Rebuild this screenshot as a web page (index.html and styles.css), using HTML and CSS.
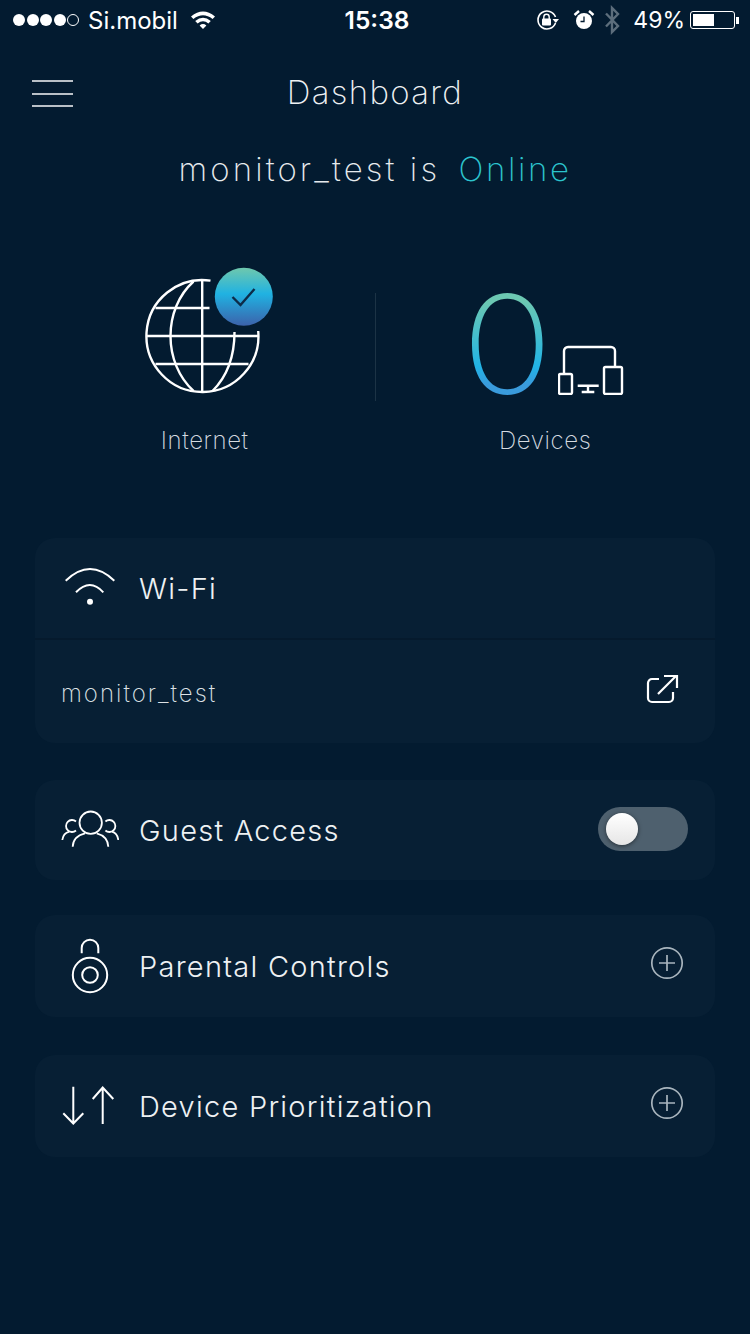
FILE: index.html
```html
<!DOCTYPE html>
<html lang="en">
<head>
  <meta charset="UTF-8">
  <meta name="viewport" content="width=device-width, initial-scale=1.0">
  <title>Dashboard</title>
  <link rel="stylesheet" href="styles.css">
</head>
<body>
  <div class="status-bar">
    <div class="status-left">
      <div class="signal">
        <span class="dot"></span><span class="dot"></span><span class="dot"></span><span class="dot"></span><span class="dot dot-empty"></span>
      </div>
      <span class="carrier">Si.mobil</span>
      <svg class="status-wifi" width="26" height="20" viewBox="0 0 26 20">
        <path d="M1 6.5 Q13 -3.5 25 6.5 L22.6 9 Q13 1.5 3.4 9 Z" fill="#fff"/>
        <path d="M5.2 11 Q13 4.5 20.8 11 L18.4 13.4 Q13 9.2 7.6 13.4 Z" fill="#fff"/>
        <path d="M9.6 15.4 Q13 12.6 16.4 15.4 L13 19 Z" fill="#fff"/>
      </svg>
    </div>
    <span class="time">15:38</span>
    <div class="status-right">
      <svg class="status-icon" width="24" height="22" viewBox="0 0 24 22">
        <path d="M19.5 8 A9 9 0 1 0 19.5 14" fill="none" stroke="#fff" stroke-width="1.6"/>
        <path d="M16.5 10 H23 L19.8 14 Z" fill="#fff"/>
        <rect x="6" y="9.5" width="9" height="7" rx="1" fill="#fff"/>
        <path d="M7.8 10 V8 A2.7 2.7 0 0 1 13.2 8 V10" fill="none" stroke="#fff" stroke-width="1.4"/>
      </svg>
      <svg class="status-icon status-alarm" width="22" height="22" viewBox="0 0 22 22">
        <circle cx="11" cy="12" r="8" fill="#fff"/>
        <path d="M11 7.5 V12.5 H7.5" fill="none" stroke="#021a2f" stroke-width="1.3"/>
        <path d="M1.5 6 L6 2 M20.5 6 L16 2" stroke="#fff" stroke-width="2.4"/>
      </svg>
      <svg class="status-icon" width="16" height="30" viewBox="0 0 16 30">
        <path d="M2 8.5 L14 21 L8 27 V3 L14 9 L2 21.5" fill="none" stroke="#5d6e7c" stroke-width="2.4"/>
      </svg>
      <span class="battery-text">49%</span>
      <div class="battery">
        <div class="battery-body"><div class="battery-fill"></div></div>
        <div class="battery-nub"></div>
      </div>
    </div>
  </div>

  <header class="top-bar">
    <div class="menu-btn"><span></span><span></span><span></span></div>
    <h1>Dashboard</h1>
  </header>

  <p class="subtitle">monitor_test is <span class="online">Online</span></p>

  <section class="stats">
    <div class="stat">
      <svg class="stat-visual" width="136" height="130" viewBox="-3.5 0 136 130">
        <defs>
          <linearGradient id="badgeGrad" x1="0" y1="0" x2="0" y2="1">
            <stop offset="0" stop-color="#6fc8ad"/>
            <stop offset="0.45" stop-color="#20b2e2"/>
            <stop offset="1" stop-color="#3c62ab"/>
          </linearGradient>
        </defs>
        <g fill="none" stroke="#fff" stroke-width="2.4">
          <path d="M70 15.6 A56 56 0 1 0 117.7 66"/>
          <path d="M15 43 H69 M5.7 71 H118 M15 99 H108 M61.7 15 V127"/>
          <path d="M53 16.5 C38 30 30 50 30 71 C30 92 38 112 53 126"/>
          <path d="M72 126 C86 112 94 92 94 67"/>
        </g>
        <circle cx="103.3" cy="31.7" r="29" fill="url(#badgeGrad)"/>
        <path d="M92 32 L100 40 L114 24" fill="none" stroke="#0d2b48" stroke-width="2.4"/>
      </svg>
      <span class="stat-label">Internet</span>
    </div>
    <div class="stat-divider"></div>
    <div class="stat">
      <div class="stat-visual devices-visual">
        <span class="zero">0</span>
        <svg class="devices-icon" width="66" height="50" viewBox="0 0 66 50">
          <g fill="none" stroke="#fff" stroke-width="2.4">
            <path d="M6 28 V6 A4 4 0 0 1 10 2 H53 A4 4 0 0 1 57 6 V22"/>
            <rect x="1" y="29" width="13" height="20" rx="1.5"/>
            <rect x="46" y="22" width="18" height="27" rx="1.5"/>
            <path d="M19.7 40.7 H40.7 M30 40.7 V47 M23.7 47 H36.3"/>
          </g>
        </svg>
      </div>
      <span class="stat-label">Devices</span>
    </div>
  </section>

  <main class="cards">
    <section class="card card-wifi">
      <div class="row row-top">
        <svg class="row-icon" width="58" height="58" viewBox="0 0 58 58">
          <g fill="none" stroke="#fff" stroke-width="2">
            <path d="M4.7 21.7 Q29 -1.7 53.3 21.7"/>
            <path d="M15 33.3 Q29 18.7 42.3 33.3"/>
          </g>
          <circle cx="29" cy="42.7" r="3" fill="#fff"/>
        </svg>
        <span class="row-title">Wi-Fi</span>
      </div>
      <div class="row row-network">
        <span class="network-name">monitor_test</span>
        <svg class="link-icon" width="34" height="32" viewBox="0 0 34 32">
          <g fill="none" stroke="#fff" stroke-width="2.2">
            <path d="M13 5 H6 A4 4 0 0 0 2 9 V24 A4 4 0 0 0 6 28 H23 A4 4 0 0 0 27 24 V18"/>
            <path d="M12 20 L30 2 M18 2 H31 V14"/>
          </g>
        </svg>
      </div>
    </section>

    <section class="card card-guest">
      <div class="row">
        <svg class="row-icon" width="58" height="58" viewBox="0 0 58 58">
          <g fill="none" stroke="#fff" stroke-width="1.8">
            <circle cx="29.7" cy="21.7" r="11.2"/>
            <path d="M11.7 45.7 C12 38 17 34 24 32.3"/>
            <path d="M47.3 45.7 C47 38 42 34 35.7 32.3"/>
            <path d="M15 20.5 A6 6 0 1 0 15 29.5"/>
            <path d="M44.4 20.5 A6 6 0 1 1 44.4 29.5"/>
            <path d="M1.3 39 C2 34 5 31.5 8.3 30.7"/>
            <path d="M57.3 39 C56.6 34 54 31.5 51 30.7"/>
          </g>
        </svg>
        <span class="row-title">Guest Access</span>
        <div class="toggle"><div class="toggle-knob"></div></div>
      </div>
    </section>

    <section class="card card-parental">
      <div class="row">
        <svg class="row-icon" width="58" height="58" viewBox="0 0 58 58">
          <g fill="none" stroke="#fff" stroke-width="2">
            <circle cx="29" cy="38" r="17.2"/>
            <circle cx="29" cy="38" r="7.8"/>
            <path d="M20.7 16.3 V11 A8.3 8.3 0 0 1 37.3 11 V16.3"/>
          </g>
        </svg>
        <span class="row-title">Parental Controls</span>
        <svg class="plus-icon" width="34" height="34" viewBox="0 0 34 34">
          <g fill="none" stroke="#a9b5be" stroke-width="1.7">
            <circle cx="17" cy="17" r="15.2"/>
            <path d="M9 17 H25 M17 9 V25"/>
          </g>
        </svg>
      </div>
    </section>

    <section class="card card-priority">
      <div class="row">
        <svg class="row-icon" width="58" height="58" viewBox="0 0 58 58">
          <g fill="none" stroke="#fff" stroke-width="2">
            <path d="M12.3 9.7 V47 M2.3 36.3 L12.3 46.5 L22.3 36.3"/>
            <path d="M41.7 47 V10 M31.7 22 L41.7 10.5 L52.3 22"/>
          </g>
        </svg>
        <span class="row-title">Device Prioritization</span>
        <svg class="plus-icon" width="34" height="34" viewBox="0 0 34 34">
          <g fill="none" stroke="#a9b5be" stroke-width="1.7">
            <circle cx="17" cy="17" r="15.2"/>
            <path d="M9 17 H25 M17 9 V25"/>
          </g>
        </svg>
      </div>
    </section>
  </main>
</body>
</html>
```
FILE: styles.css
```css
* {
  box-sizing: border-box;
}

body {
  margin: 0;
  height: 1334px;
  overflow: hidden;
  background: #031b30;
  color: #fff;
  font-family: "Inter", "Noto Sans", sans-serif;
  font-weight: 300;
}

/* status bar */
.status-bar {
  height: 40px;
  padding: 0 11px 0 13px;
  display: grid;
  grid-template-columns: 1fr auto 1fr;
  align-items: center;
}

.status-left,
.status-right {
  display: flex;
  align-items: center;
}

.status-right {
  justify-content: flex-end;
}

.signal {
  display: flex;
  gap: 1.5px;
}

.dot {
  width: 12px;
  height: 12px;
  border-radius: 50%;
  background: #fff;
}

.dot-empty {
  background: none;
  border: 1px solid #fff;
}

.carrier {
  margin-left: 9px;
  font-size: 24px;
  font-weight: 400;
}

.status-wifi {
  margin-left: 12px;
}

.time {
  margin-left: 2px;
  font-size: 24.5px;
  font-weight: 600;
}

.status-icon {
  margin-right: 13px;
}

.status-alarm {
  margin-right: 9px;
}

.battery-text {
  font-size: 23px;
  font-weight: 400;
}

.battery {
  margin-left: 5px;
  display: flex;
  align-items: center;
}

.battery-body {
  width: 45px;
  height: 18px;
  padding: 2px;
  border: 1px solid #fff;
  border-radius: 3px;
}

.battery-fill {
  width: 21px;
  height: 100%;
  background: #fff;
}

.battery-nub {
  width: 3px;
  height: 7px;
  margin-left: 1px;
  background: #fff;
}

/* header */
.top-bar {
  height: 104px;
  display: flex;
  align-items: center;
  justify-content: center;
  position: relative;
}

.top-bar h1 {
  margin: 0;
  font-size: 33px;
  font-weight: 200;
  letter-spacing: 1.3px;
  color: #eef1f3;
}

.menu-btn {
  position: absolute;
  left: 32px;
  top: 40px;
  width: 41px;
  display: flex;
  flex-direction: column;
  gap: 10.5px;
}

.menu-btn span {
  height: 2px;
  background: #b9c0c7;
}

.subtitle {
  margin: 0;
  height: 50px;
  line-height: 50px;
  text-align: center;
  font-size: 33px;
  font-weight: 200;
  letter-spacing: 3.1px;
  color: #e6eaed;
}

.online {
  margin-left: 6px;
  letter-spacing: 2.6px;
  color: #2cc4cd;
}

/* internet / devices */
.stats {
  margin: 71px 35px 0;
  display: grid;
  grid-template-columns: 1fr 1px 1fr;
}

.stat {
  display: flex;
  flex-direction: column;
  align-items: center;
}

.stat-visual {
  display: block;
  height: 130px;
}

.stat-label {
  margin-top: 31px;
  height: 30px;
  line-height: 30px;
  font-size: 24px;
  font-weight: 200;
  letter-spacing: 0.6px;
  color: #d5dbe0;
}

.stat-divider {
  margin-top: 28px;
  height: 108px;
  background: #1c3345;
}

.devices-visual {
  display: flex;
  gap: 9px;
  margin-right: 1px;
}

.zero {
  height: 130px;
  line-height: 158px;
  font-size: 137px;
  font-weight: 200;
  transform: scaleX(1.1);
  background: linear-gradient(#6cc8b2 0, #6cc8b2 28%, #21b4e6 78%, #3a9bdc 92%);
  -webkit-background-clip: text;
  background-clip: text;
  color: transparent;
}

.devices-icon {
  align-self: flex-end;
}

/* cards */
.cards {
  margin: 82px 35px 0;
  display: flex;
  flex-direction: column;
}

.card {
  background: #071f34;
  border-radius: 20px;
}

.card-wifi {
  height: 205px;
}

.card-guest {
  height: 100px;
  margin-top: 37px;
}

.card-parental {
  height: 102px;
  margin-top: 35px;
}

.card-priority {
  height: 102px;
  margin-top: 38px;
}

.row {
  height: 100%;
  padding: 0 31px 0 26px;
  display: flex;
  align-items: center;
}

.row-top {
  height: 102px;
  border-bottom: 2px solid #051a2d;
}

.row-network {
  height: 103px;
  justify-content: space-between;
}

.row-icon {
  flex: none;
  margin-right: 20px;
}

.row-title {
  flex: 1;
  font-size: 29px;
  font-weight: 300;
  letter-spacing: 1.25px;
  color: #eef1f3;
}

.network-name {
  margin-top: 3px;
  font-size: 24px;
  font-weight: 200;
  letter-spacing: 2px;
  color: #dde2e6;
}

.link-icon {
  margin-right: 4px;
  margin-bottom: 4px;
}

.plus-icon {
  margin-bottom: 6px;
}

.toggle {
  width: 90px;
  height: 44px;
  margin-right: -4px;
  margin-bottom: 2px;
  padding: 6px 8px;
  border-radius: 22px;
  background: #4e606e;
}

.toggle-knob {
  width: 32px;
  height: 32px;
  border-radius: 50%;
  background: linear-gradient(#ffffff, #e6e6e6);
  box-shadow: 0 1px 4px rgba(0, 0, 0, 0.5);
}
```
